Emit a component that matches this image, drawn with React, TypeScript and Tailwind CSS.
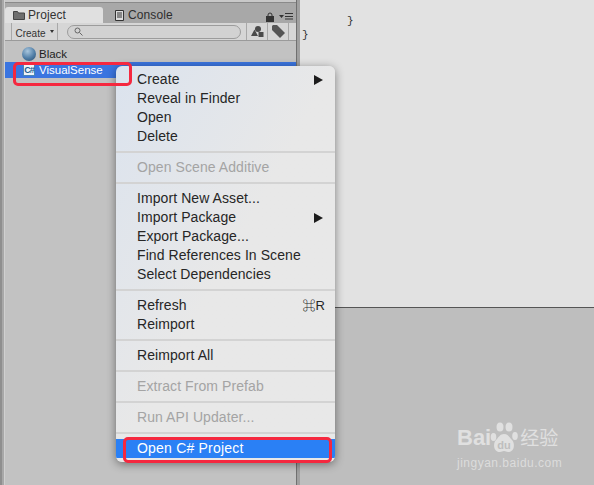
import type { ReactNode } from 'react'

const font = { fontFamily: '"Liberation Sans", "Noto Sans CJK SC", sans-serif' }

function Item({ label, disabled, arrow, shortcut }: { label: string; disabled?: boolean; arrow?: boolean; shortcut?: string }) {
  return (
    <div className={`flex h-[19px] items-center justify-between pl-[21px] pr-[10px] text-[14px] tracking-[0.08px] ${disabled ? 'text-[#a4a4a4]' : 'text-[#262626]'}`}>
      <span>{label}</span>
      {arrow && <span className="mr-[2px] h-0 w-0 border-y-[5px] border-l-[9px] border-y-transparent border-l-[#1c1c1c]" />}
      {shortcut && <span className="text-[13px]">{shortcut}</span>}
    </div>
  )
}

function Sep() {
  return <div className="my-[5px] h-[2px] bg-[#d3d3d3]" />
}

function ToolBtn({ children, className }: { children: ReactNode; className?: string }) {
  return <div className={`flex h-full items-center justify-center border-r border-[#a8a8a8] ${className ?? ''}`}>{children}</div>
}

function ContextMenu() {
  return (
    <div className="absolute left-[116px] top-[66px] w-[219px] overflow-hidden rounded-[6px] bg-gradient-to-br from-[#dbe3ee] via-[#e8e8e8] to-[#e8e8e8] pt-[4px] pb-[4px] shadow-[0_2px_10px_rgba(0,0,0,0.45)]">
      <Item label="Create" arrow />
      <Item label="Reveal in Finder" />
      <Item label="Open" />
      <Item label="Delete" />
      <Sep />
      <Item label="Open Scene Additive" disabled />
      <Sep />
      <Item label="Import New Asset..." />
      <Item label="Import Package" arrow />
      <Item label="Export Package..." />
      <Item label="Find References In Scene" />
      <Item label="Select Dependencies" />
      <Sep />
      <Item label="Refresh" shortcut="⌘R" />
      <Item label="Reimport" />
      <Sep />
      <Item label="Reimport All" />
      <Sep />
      <Item label="Extract From Prefab" disabled />
      <Sep />
      <Item label="Run API Updater..." disabled />
      <Sep />
      <div className="flex h-[19px] items-center bg-[#2a80f5] pl-[21px] text-[14px] tracking-[0.2px] text-white">Open C# Project</div>
    </div>
  )
}

function BaiduMark() {
  return (
    <div className="absolute left-[457px] top-[421px] flex w-[110px] flex-col text-[#e0e0e0]">
      <div className="flex items-end">
        <span className="text-[22px] font-bold leading-[32px]">Bai</span>
        <div className="relative ml-[-1px] h-[33px] w-[28px]">
          <svg width="28" height="33" viewBox="0 0 28 33" fill="currentColor">
            <ellipse cx="3.500" cy="16" rx="2.800" ry="4" />
            <ellipse cx="10" cy="6" rx="3.500" ry="4.500" />
            <ellipse cx="19" cy="6" rx="3.500" ry="4.500" />
            <ellipse cx="25" cy="15" rx="2.800" ry="4" />
            <path d="M14 13c4 0 5 3 8 6 3 3 3 12-4 12-2 0-2-1-4-1s-2 1-4 1c-7 0-7-9-4-12 3-3 4-6 8-6z" />
          </svg>
          <span className="absolute left-[7px] top-[18px] text-[11px] font-bold leading-[12px] text-[#bebebe]">du</span>
        </div>
        <span className="ml-[2px] text-[19px] leading-[30px]">经验</span>
      </div>
      <span className="mt-[2px] whitespace-nowrap text-[12px] leading-[14px] tracking-[0.5px] text-[#dcdcdc]">jingyan.baidu.com</span>
    </div>
  )
}

export default function App() {
  return (
    <div className="relative flex h-[485px] w-[594px] overflow-hidden bg-[#bebebe]" style={font}>
      {/* franja izquierda */}
      <div className="h-full w-[5px] shrink-0 border-l-2 border-r border-l-[#8f8f8f] border-r-[#d0d0d0] bg-[#a8a8a8]" />

      {/* panel Project */}
      <div className="flex h-full w-[291px] shrink-0 flex-col bg-[#c2c2c2]">
        <div className="h-[3px] border-b border-[#8a8a8a] bg-[#c8c8c8]" />
        <div className="flex h-[20px] items-end bg-[#a8a8a8]">
          <div className="flex h-[16px] w-[98px] items-center gap-[3px] rounded-t-[3px] bg-[#e0e0e0] pl-[8px] text-[12px] tracking-[0.1px] text-[#333]">
            <svg width="12" height="9" viewBox="0 0 12 9" fill="#6e6e6e" stroke="#444"><path d="M.5.5h4l1 1.500h6v6.500H.5z" /></svg>
            Project
          </div>
          <div className="ml-[12px] flex h-[16px] items-center gap-[4px] text-[12px] tracking-[0.1px] text-[#2e2e2e]">
            <svg width="9" height="11" viewBox="0 0 9 11" fill="#dcdcdc" stroke="#333"><path d="M.5.5h8v10h-8zM2 3h5M2 5h5M2 7h5" /></svg>
            Console
          </div>
          <div className="ml-auto mr-[3px] flex h-[16px] items-center gap-[5px] pt-[3px]">
            <svg width="8" height="10" viewBox="0 0 8 10" fill="#333">
              <path d="M0 4h8v6H0z" />
              <path d="M2 4V3a2 2 0 0 1 4 0v1" fill="none" stroke="#333" />
            </svg>
            <svg width="14" height="7" viewBox="0 0 14 7" fill="#333"><path d="M0 2h5L2.500 5zM6 0h8v1H6zM6 3h8v1H6zM6 5.500h8v1H6z" /></svg>
          </div>
        </div>
        <div className="flex h-[18px] items-center border-b border-[#9a9a9a] bg-[#d6d6d6] pl-[6px]">
          <div className="h-full border-l border-[#a8a8a8]" />
          <ToolBtn className="w-[46px] gap-[4px] text-[10px] text-[#333]">
            <span className="pt-[3px]">Create</span>
            <span className="h-0 w-0 border-x-[2.500px] border-t-[3px] border-x-transparent border-t-[#333]" />
          </ToolBtn>
          <div className="ml-[9px] mr-[5px] flex h-[14px] w-[174px] items-center rounded-full border border-[#9c9c9c] bg-[#d2d2d2] pl-[6px]">
            <svg width="9" height="9" viewBox="0 0 9 9" fill="none" stroke="#666"><circle cx="3.500" cy="3.500" r="2.500" /><path d="M5.500 5.500L8.500 8.500" /></svg>
          </div>
          <ToolBtn className="w-[22px] border-l">
            <svg width="13" height="11" viewBox="0 0 13 11" fill="#4a4a4a"><circle cx="7" cy="3" r="3" /><path d="M3.500 3.500L7 10H0z" /><path d="M7.500 6h5v5h-5z" /></svg>
          </ToolBtn>
          <ToolBtn className="w-[21px]">
            <svg width="13" height="13" viewBox="0 0 13 13" fill="#555"><path d="M0 1l1-1h4l8 8-5 5-8-8z" /></svg>
          </ToolBtn>
        </div>
        <div className="box-content flex h-[16px] items-center gap-[3px] pl-[17px] pt-[5px] text-[11.500px] text-[#1e1e1e]">
          <span className="h-[14px] w-[14px] rounded-full bg-[radial-gradient(circle_at_40%_30%,#a9c6dd,#4f7da6_55%,#27486b)]" />
          <span className="pt-[2px]">Black</span>
        </div>
        <div className="flex h-[16px] items-center gap-[4px] bg-[#3b75e0] pl-[18px] text-[11.500px] text-white">
          <span className="flex h-[12px] w-[12px] items-center justify-center border border-[#4a86b5] bg-[#eef4f9] text-[9px] font-bold leading-none tracking-[-1px] text-[#1d5c8e]">C#</span>
          <span className="pt-[2px]">VisualSense</span>
        </div>
      </div>

      {/* divisor */}
      <div className="h-full w-[4px] shrink-0 border-l border-[#707070] bg-[#a0a0a0]" />

      {/* editor de codigo */}
      <div className="flex h-full flex-1 flex-col">
        <div className="h-[308px] border-b border-[#555] bg-[#e2e2e2] font-mono text-[11px] leading-[14px] text-[#333]">
          <div className="pl-[47px] pt-[14px]">{'}'}</div>
          <div className="pl-[2px]">{'}'}</div>
        </div>
        <div className="flex-1 bg-[#bebebe]" />
      </div>

      <ContextMenu />

      {/* marcos rojos */}
      <div className="absolute left-[13px] top-[62px] h-[24px] w-[119px] rounded-[5px] border-[3px] border-[#f5283f]" />
      <div className="absolute left-[123px] top-[437px] h-[26px] w-[209px] rounded-[5px] border-[3px] border-[#f5283f]" />

      <BaiduMark />
    </div>
  )
}
